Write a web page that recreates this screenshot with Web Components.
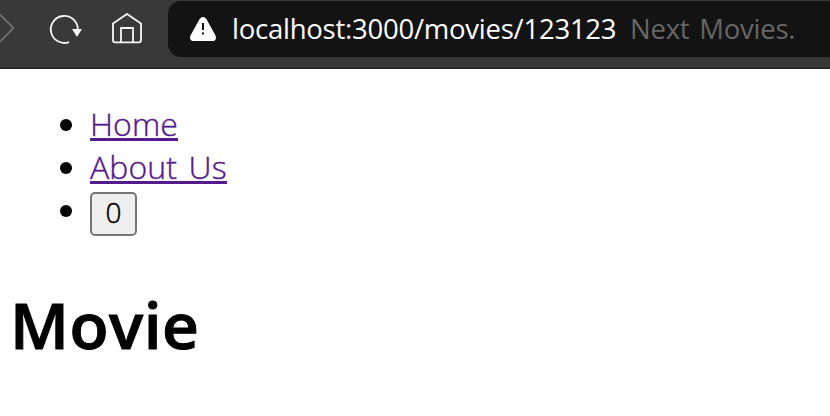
<!DOCTYPE html>
<html lang="en">
<head>
<meta charset="utf-8">
<title>Next Movies.</title>
<style>
body { margin: 0; background: #fff; overflow: hidden; font-family: "Open Sans", "Noto Sans", sans-serif; }
</style>
</head>
<body>
<browser-bar><address-field><span>localhost:3000/movies/123123</span><span slot="title">Next Movies.</span></address-field></browser-bar>
<movie-page>
  <nav-item><nav-link style="--track:0.05px">Home</nav-link></nav-item>
  <nav-item><nav-link style="--track:0.1px">About Us</nav-link></nav-item>
  <nav-item><count-button>0</count-button></nav-item>
  <span slot="heading">Movie</span>
</movie-page>
<script>
function define(name, markup) {
  const template = document.createElement('template');
  template.innerHTML = markup;
  customElements.define(name, class extends HTMLElement {
    constructor() {
      super();
      this.attachShadow({ mode: 'open' }).append(template.content.cloneNode(true));
    }
  });
}

define('browser-bar', `
<style>
:host { display: flex; box-sizing: border-box; height: 69px; padding-top: 1px; background: #393939; border-bottom: 2px solid #292929; }
svg { flex: none; width: 168px; height: 56px; fill: none; }
::slotted(address-field) { flex: 1; }
</style>
<svg viewBox="0 0 168 56">
  <path d="M0 13.800 13.400 27 0 40.500" stroke="#7b7b7b" stroke-width="1.500"/>
  <path d="M69 41.100A13.500 13.500 0 1 1 77.800 29" stroke="#f5f5f5" stroke-width="1.800"/>
  <path d="M72 28h10l-5 8z" fill="#f5f5f5"/>
  <path d="M113 22.500 127 13l14 9.500V39q0 2.300-2.300 2.300h-23.400Q113 41.300 113 39z" stroke="#f5f5f5" stroke-width="1.800" stroke-linejoin="round"/>
  <path d="M121 41V27h12v14" stroke="#f5f5f5" stroke-width="1.800"/>
</svg>
<slot></slot>`);

define('address-field', `
<style>
:host { display: flex; align-items: center; box-sizing: border-box; height: 56px; padding-left: 22px; background: #131313; border-radius: 13px 0 0 13px; color: #fff; font-size: 27.500px; white-space: nowrap; }
svg { width: 26px; height: 24px; margin: 0 16px 0 0; flex: none; }
.url, .title { line-height: 56px; }
.url { width: 398px; letter-spacing: -0.240px; }
.title { color: #666; word-spacing: 3px; letter-spacing: -0.250px; }
</style>
<svg viewBox="0 0 26 24"><path d="M9.300 2.400Q13-2.200 16.700 2.400L25.500 18.500Q27.200 24 22 24H4Q-1.200 24 .5 18.500z" fill="#fff"/><path d="M12 6h2v7h-2zm0 9.500h2v2h-2z" fill="#131313"/></svg>
<div class="url"><slot></slot></div><div class="title"><slot name="title"></slot></div>`);

define('movie-page', `
<style>
:host { display: block; padding: 34px 12px 0; color: #000; }
ul { display: grid; grid-template-rows: 43px 43px 48px; margin: 0; padding: 0 0 0 48px; list-style: none; }
h1 { margin: 45px 0 0 -2px; font-size: 64px; line-height: 86px; font-weight: 600; letter-spacing: 0.500px; -webkit-text-stroke: 1px #000; }
</style>
<ul><slot></slot></ul>
<h1><slot name="heading"></slot></h1>`);

define('nav-item', `
<style>
:host { display: flex; align-items: flex-start; }
.dot { width: 12px; height: 12px; margin: 16px 18px 0 0; border-radius: 50%; background: #000; flex: none; }
</style>
<span class="dot"></span><slot></slot>`);

define('nav-link', `
<style>
:host { display: block; }
a { display: block; height: 35px; border-bottom: 3px solid #551a8b; color: #551a8b; font-size: 32px; font-weight: 300; -webkit-text-stroke: 0.400px #551a8b; line-height: 41px; letter-spacing: var(--track); word-spacing: 3px; white-space: nowrap; }
</style>
<a><slot></slot></a>`);

define('count-button', `
<style>
:host { display: block; padding-top: 3px; }
button { display: flex; justify-content: center; box-sizing: border-box; width: 47px; height: 44px; padding: 0; border: 2px solid #767676; border-radius: 5px; background: #efefef; color: #000; font: 300 28px/36px "Open Sans", "Noto Sans", sans-serif; -webkit-text-stroke: 0.500px #000; align-items: flex-start; }
</style>
<button><slot></slot></button>`);
</script>
</body>
</html>
